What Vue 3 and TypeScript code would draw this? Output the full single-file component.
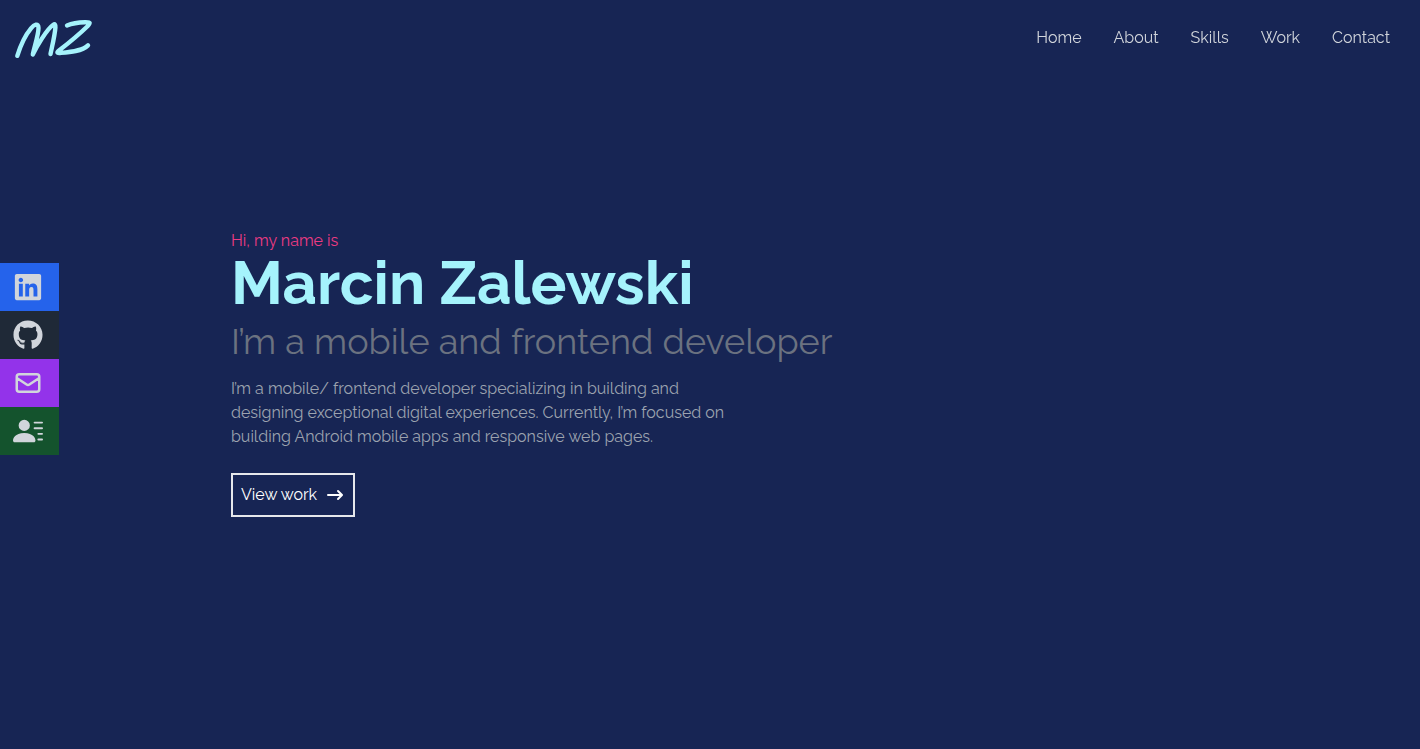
<script setup lang="ts">
interface NavItem {
  label: string
  href: string
}

interface SocialItem {
  id: string
  label: string
  href: string
}

const navItems: NavItem[] = [
  { label: 'Home', href: '#home' },
  { label: 'About', href: '#about' },
  { label: 'Skills', href: '#skills' },
  { label: 'Work', href: '#work' },
  { label: 'Contact', href: '#contact' },
]

const socialItems: SocialItem[] = [
  { id: 'linkedin', label: 'LinkedIn', href: '#linkedin' },
  { id: 'github', label: 'GitHub', href: '#github' },
  { id: 'mail', label: 'Email', href: '#mail' },
  { id: 'resume', label: 'Resume', href: '#resume' },
]
</script>

<template>
  <div class="page">
    <header class="topbar">
      <a class="logo" href="#home" aria-label="Marcin Zalewski">
        <svg width="80" height="42" viewBox="0 0 80 42" aria-hidden="true">
          <path d="M3.300 38.800C6 30 11 18.500 17 11.300C20 7.600 24.500 5.500 24.500 11C24.500 18 20 31 18.800 37.500C22.500 30 32.500 12.500 39 8C41 6.600 41.600 7.500 41.400 10.500C40.800 19 38 29.500 36.500 37" />
          <path d="M53 8.500C57 6.800 63 5.400 71 5.200C77 5 76.500 6 73.500 9.200C65 17.500 54 26.500 45 33.500C42.500 35.500 43 36.300 46 36C55 35.300 68 34.500 74 28.400" />
        </svg>
      </a>
      <nav class="nav" aria-label="Main">
        <a v-for="item in navItems" :key="item.href" :href="item.href">{{ item.label }}</a>
      </nav>
    </header>

    <main id="home" class="hero">
      <p class="greeting">Hi, my name is</p>
      <h1>Marcin Zalewski</h1>
      <h2>I’m a mobile and frontend developer</h2>
      <p class="intro">
        I’m a mobile/ frontend developer specializing in building and designing exceptional digital
        experiences. Currently, I’m focused on building Android mobile apps and responsive web pages.
      </p>
      <button class="cta" type="button">
        <span>View work</span>
        <svg width="20" height="20" viewBox="0 0 20 20" fill="currentColor" aria-hidden="true">
          <path fill-rule="evenodd" clip-rule="evenodd" d="M12.293 5.293a1 1 0 011.414 0l4 4a1 1 0 010 1.414l-4 4a1 1 0 01-1.414-1.414L14.586 11H3a1 1 0 110-2h11.586l-2.293-2.293a1 1 0 010-1.414z" />
        </svg>
      </button>
    </main>

    <aside class="social" aria-label="Social links">
      <a v-for="item in socialItems" :key="item.id" :href="item.href" :class="item.id" :aria-label="item.label">
        <svg v-if="item.id === 'linkedin'" width="30" height="30" viewBox="0 0 448 512" fill="currentColor" aria-hidden="true">
          <path d="M416 32H31.900C14.300 32 0 46.500 0 64.300v383.400C0 465.500 14.300 480 31.900 480H416c17.600 0 32-14.500 32-32.300V64.300c0-17.800-14.400-32.300-32-32.300zM135.400 416H69V202.200h66.500V416zm-33.200-243c-21.300 0-38.500-17.300-38.500-38.500S80.900 96 102.200 96c21.200 0 38.500 17.300 38.500 38.500 0 21.300-17.200 38.500-38.500 38.500zm282.100 243h-66.400V312c0-24.800-.5-56.700-34.500-56.700-34.600 0-39.900 27-39.900 54.900V416h-66.400V202.200h63.700v29.200h.9c8.900-16.800 30.600-34.500 62.900-34.500 67.200 0 79.700 44.300 79.700 101.900V416z" />
        </svg>
        <svg v-else-if="item.id === 'github'" width="30" height="30" viewBox="0 0 496 512" fill="currentColor" aria-hidden="true">
          <path d="M165.900 397.400c0 2-2.300 3.600-5.200 3.600-3.300.3-5.600-1.300-5.600-3.600 0-2 2.300-3.600 5.200-3.600 3-.3 5.600 1.300 5.600 3.600zm-31.100-4.500c-.7 2 1.300 4.300 4.300 4.900 2.600 1 5.600 0 6.200-2s-1.300-4.300-4.300-5.200c-2.600-.7-5.500.3-6.200 2.300zm44.200-1.700c-2.900.7-4.900 2.600-4.600 4.900.3 2 2.900 3.300 5.900 2.600 2.900-.7 4.900-2.600 4.600-4.600-.3-1.900-3-3.200-5.900-2.900zM244.800 8C106.100 8 0 113.300 0 252c0 110.900 69.800 205.800 169.500 239.200 12.800 2.300 17.300-5.600 17.300-12.100 0-6.200-.3-40.400-.3-61.400 0 0-70 15-84.700-29.800 0 0-11.400-29.100-27.800-36.600 0 0-22.900-15.700 1.600-15.400 0 0 24.900 2 38.600 25.800 21.900 38.600 58.600 27.500 72.900 20.900 2.300-16 8.800-27.100 16-33.700-55.900-6.200-112.300-14.300-112.300-110.500 0-27.500 7.600-41.300 23.600-58.900-2.600-6.500-11.100-33.300 2.600-67.900 20.900-6.500 69 27 69 27 20-5.600 41.500-8.500 62.800-8.500s42.800 2.900 62.800 8.500c0 0 48.100-33.600 69-27 13.700 34.700 5.200 61.400 2.600 67.900 16 17.700 25.800 31.500 25.800 58.900 0 96.500-58.900 104.200-114.800 110.500 9.200 7.900 17 22.900 17 46.400 0 33.700-.3 75.400-.3 83.600 0 6.500 4.600 14.400 17.300 12.100C428.200 457.800 496 362.900 496 252 496 113.300 383.500 8 244.800 8zM97.200 352.900c-1.300 1-1 3.300.7 5.200 1.600 1.600 3.900 2.300 5.200 1 1.300-1 1-3.300-.7-5.200-1.600-1.600-3.900-2.300-5.200-1zm-10.800-8.100c-.7 1.300.3 2.900 2.300 3.900 1.600 1 3.600.7 4.300-.7.7-1.300-.3-2.900-2.300-3.900-2-.6-3.600-.3-4.300.7zm32.400 35.600c-1.600 1.300-1 4.300 1.300 6.200 2.300 2.300 5.200 2.600 6.500 1 1.300-1.300.7-4.300-1.300-6.200-2.200-2.300-5.200-2.600-6.500-1zm-11.400-14.700c-1.600 1-1.600 3.600 0 5.900 1.600 2.300 4.300 3.300 5.600 2.300 1.600-1.300 1.600-3.900 0-6.200-1.400-2.300-4-3.300-5.600-2z" />
        </svg>
        <svg v-else-if="item.id === 'mail'" width="30" height="30" viewBox="0 0 24 24" fill="none" stroke="currentColor" stroke-width="2" stroke-linecap="round" stroke-linejoin="round" aria-hidden="true">
          <path d="M3 8l7.890 5.260a2 2 0 002.220 0L21 8M5 19h14a2 2 0 002-2V7a2 2 0 00-2-2H5a2 2 0 00-2 2v10a2 2 0 002 2z" />
        </svg>
        <svg v-else width="30" height="30" viewBox="0 0 16 16" fill="currentColor" aria-hidden="true">
          <path d="M6 8a3 3 0 1 0 0-6 3 3 0 0 0 0 6zm-5 6s-1 0-1-1 1-4 6-4 6 3 6 4-1 1-1 1H1zM11 3.500a.5.5 0 0 1 .5-.5h4a.5.5 0 0 1 0 1h-4a.5.5 0 0 1-.5-.5zm.5 2.500a.5.5 0 0 0 0 1h4a.5.5 0 0 0 0-1h-4zm2 3a.5.5 0 0 0 0 1h2a.5.5 0 0 0 0-1h-2zm0 3a.5.5 0 0 0 0 1h2a.5.5 0 0 0 0-1h-2z" />
        </svg>
      </a>
    </aside>
  </div>
</template>

<style>
body {
  margin: 0;
  background: #172554;
}
</style>

<style scoped>
.page {
  display: grid;
  grid-template-columns: auto 1fr;
  min-height: 100vh;
  box-sizing: border-box;
  background: #172554;
  color: #d1d5db;
  font-family: Raleway, Lato, "Open Sans", sans-serif;
  font-size: 16px;
  line-height: 24px;
}

a {
  color: inherit;
  text-decoration: none;
}

.topbar {
  position: fixed;
  inset: 0 0 auto;
  z-index: 1;
  display: flex;
  align-items: center;
  justify-content: space-between;
  height: 80px;
  box-sizing: border-box;
  padding: 0 30px 4px 14px;
}

.logo {
  display: flex;
}

.logo svg {
  fill: none;
  stroke: #a5f3fc;
  stroke-width: 4.4;
  stroke-linecap: round;
  stroke-linejoin: round;
}

.nav {
  display: flex;
  gap: 32px;
}

.hero {
  grid-area: 1 / 1 / 2 / 3;
  display: flex;
  flex-direction: column;
  align-items: flex-start;
  justify-content: center;
  width: 100%;
  max-width: 1000px;
  box-sizing: border-box;
  margin: 0 auto;
  padding: 0 21px;
}

.greeting {
  margin: 0;
  color: #ec3b83;
}

h1 {
  margin: 0 0 8px;
  color: #a5f3fc;
  font-size: 60px;
  font-weight: 700;
  line-height: 60px;
}

h2 {
  margin: 0;
  color: #6b7280;
  font-size: 36px;
  font-weight: 400;
  line-height: 40px;
}

.intro {
  max-width: 500px;
  margin: 0;
  padding: 16px 0;
  color: #9ca3af;
}

.cta {
  display: flex;
  align-items: center;
  gap: 8px;
  margin: 8px 0 4px;
  padding: 8px;
  border: 2px solid #e5e7eb;
  background: transparent;
  color: #fff;
  font: inherit;
  cursor: pointer;
}

.social {
  grid-area: 1 / 1 / 2 / 2;
  z-index: 1;
  align-self: center;
  display: flex;
  flex-direction: column;
  margin-bottom: 32px;
}

.social a {
  display: flex;
  align-items: center;
  height: 48px;
  padding: 0 16px 0 13px;
}

.linkedin {
  background: #2563eb;
}

.github {
  background: #1f2937;
}

.mail {
  background: #9333ea;
}

.resume {
  background: #14532d;
}
</style>
